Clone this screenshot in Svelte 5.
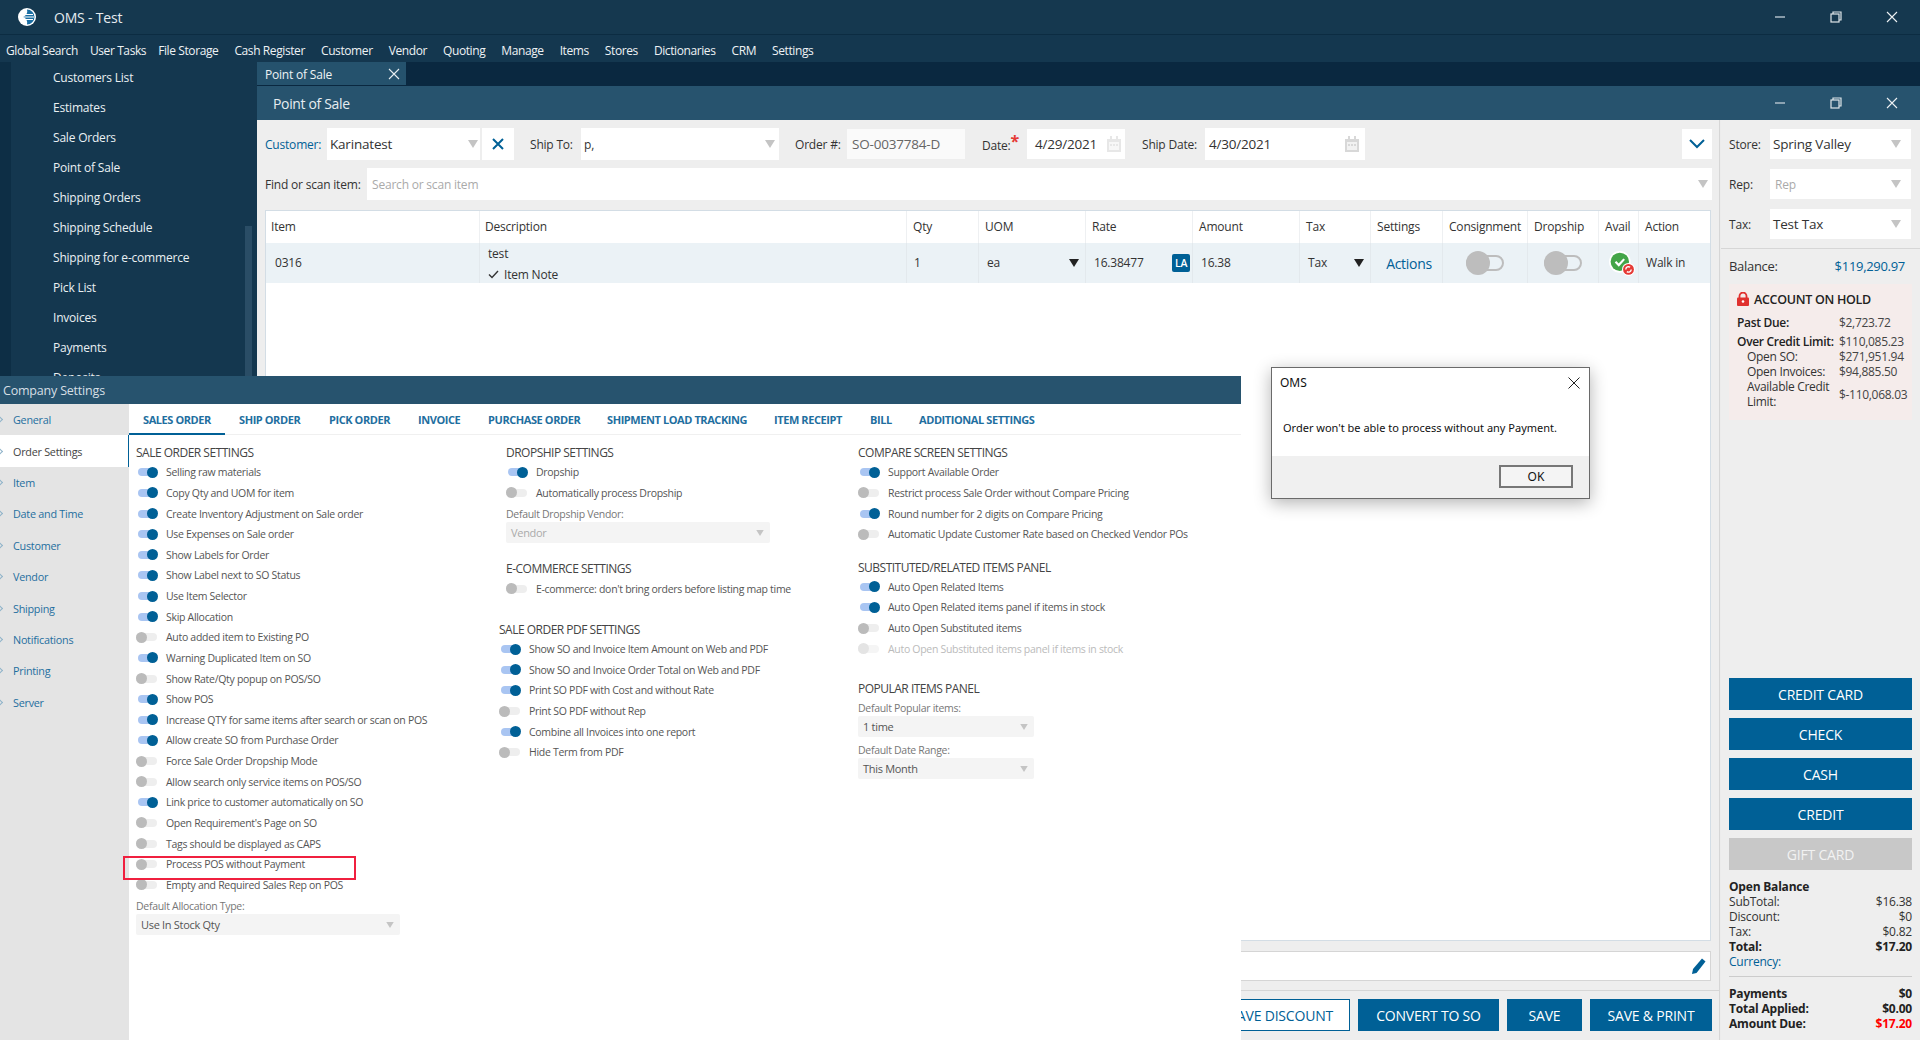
<script>
  const menu = ['Global Search','User Tasks','File Storage','Cash Register','Customer','Vendor','Quoting','Manage','Items','Stores','Dictionaries','CRM','Settings'];
  const side = ['Customers List','Estimates','Sale Orders','Point of Sale','Shipping Orders','Shipping Schedule','Shipping for e-commerce','Pick List','Invoices','Payments','Deposits'];
  const cols = [['Item',214],['Description',427],['Qty',72],['UOM',107],['Rate',107],['Amount',107],['Tax',71],['Settings',72],['Consignment',85],['Dropship',71],['Avail',40],['Action',72]];
  const nav = ['General','Order Settings','Item','Date and Time','Customer','Vendor','Shipping','Notifications','Printing','Server'];
  const tabs = [['SALES ORDER',143],['SHIP ORDER',239],['PICK ORDER',329],['INVOICE',418],['PURCHASE ORDER',488],['SHIPMENT LOAD TRACKING',607],['ITEM RECEIPT',774],['BILL',870],['ADDITIONAL SETTINGS',919]];
  const sale = [['Selling raw materials',1],['Copy Qty and UOM for item',1],['Create Inventory Adjustment on Sale order',1],['Use Expenses on Sale order',1],['Show Labels for Order',1],['Show Label next to SO Status',1],['Use Item Selector',1],['Skip Allocation',1],['Auto added item to Existing PO',0],['Warning Duplicated Item on SO',1],['Show Rate/Qty popup on POS/SO',0],['Show POS',1],['Increase QTY for same items after search or scan on POS',1],['Allow create SO from Purchase Order',1],['Force Sale Order Dropship Mode',0],['Allow search only service items on POS/SO',0],['Link price to customer automatically on SO',1],["Open Requirement's Page on SO",0],['Tags should be displayed as CAPS',0],['Process POS without Payment',0],['Empty and Required Sales Rep on POS',0]];
  const drop = [['Dropship',1],['Automatically process Dropship',0]];
  const ecom = [["E-commerce: don't bring orders before listing map time",0]];
  const pdf = [['Show SO and Invoice Item Amount on Web and PDF',1],['Show SO and Invoice Order Total on Web and PDF',1],['Print SO PDF with Cost and without Rate',1],['Print SO PDF without Rep',0],['Combine all Invoices into one report',1],['Hide Term from PDF',0]];
  const compare = [['Support Available Order',1],['Restrict process Sale Order without Compare Pricing',0],['Round number for 2 digits on Compare Pricing',1],['Automatic Update Customer Rate based on Checked Vendor POs',0]];
  const subst = [['Auto Open Related Items',1],['Auto Open Related items panel if items in stock',1],['Auto Open Substituted items',0],['Auto Open Substituted items panel if items in stock',2]];
  const pay = ['CREDIT CARD','CHECK','CASH','CREDIT'];
</script>

{#snippet winBtns()}
  <div class="winbtns">
    <svg width="12" height="12" viewBox="0 0 12 12"><path d="M1 6h10" stroke="#b9c6d0" stroke-width="1.4"/></svg>
    <svg width="12" height="12" viewBox="0 0 12 12" fill="none" stroke="#dfe6ea" stroke-width="1.2"><rect x="1" y="3" width="8" height="8"/><path d="M3 3V1h8v8H9"/></svg>
    <svg width="12" height="12" viewBox="0 0 12 12"><path d="M1 1l10 10M11 1L1 11" stroke="#eef2f4" stroke-width="1.1"/></svg>
  </div>
{/snippet}

{#snippet arrow()}
  <svg class="arr" width="10" height="8" viewBox="0 0 10 8"><path d="M0 0h10L5 8z" fill="#c4c4c4"/></svg>
{/snippet}

{#snippet cal()}
  <svg class="cal" width="14" height="16" viewBox="0 0 14 16"><path d="M0 3h14v13H0z" fill="#d8d8d8"/><path d="M2 6h10v8H2z" fill="#f2f2f2"/><path d="M3 0h2v4H3zM9 0h2v4H9z" fill="#d8d8d8"/><path d="M3 8h2v2H3zM6 8h2v2H6zM9 8h2v2H9z" fill="#d8d8d8"/></svg>
{/snippet}

{#snippet row(r)}
  <div class="srow" class:dis={r[1] === 2}>
    <span class="tog" class:on={r[1] === 1}></span>
    <span>{r[0]}</span>
  </div>
{/snippet}

<div class="app">
  <div class="title">
    <svg class="logo" width="18" height="18" viewBox="0 0 18 18">
      <circle cx="9" cy="9" r="9" fill="#fff"/>
      <path d="M9 1.5A7.5 7.5 0 0 1 9 16.5 6 6 0 0 0 5 9a6 6 0 0 0 4-7.5z" fill="#1a6ea3"/>
      <path d="M6 6.5h9M5 9h11M6 11.5h9" stroke="#fff" stroke-width="1.2"/>
    </svg>
    <span class="ttext">OMS - Test</span>
    {@render winBtns()}
  </div>
  <nav class="menu">
    {#each menu as m}<span>{m}</span>{/each}
  </nav>
  <div class="desk">
    <aside class="side">
      <div class="strip"></div>
      <ul>
        {#each side as s}<li>{s}</li>{/each}
      </ul>
      <div class="sbar"><div class="thumb"></div></div>
    </aside>
    <div class="work">
      <div class="tabstrip">
        <div class="tab"><span>Point of Sale</span>
          <svg width="12" height="12" viewBox="0 0 12 12"><path d="M1 1l10 10M11 1L1 11" stroke="#e8eef2" stroke-width="1.1"/></svg>
        </div>
      </div>
      <div class="poshead"><span>Point of Sale</span>{@render winBtns()}</div>
      <div class="posbody">
        <div class="posleft">
          <div class="frow r1">
            <label class="blue w62" for="c">Customer:</label>
            <div class="inp big cust" id="c" style="width:153px"><span>Karinatest</span>{@render arrow()}</div>
            <div class="inp xbox"><svg width="12" height="12" viewBox="0 0 12 12"><path d="M1 1l10 10M11 1L1 11" stroke="#006096" stroke-width="2"/></svg></div>
            <span class="lbl" style="width:51px;margin-left:16px">Ship To:</span>
            <div class="inp" style="width:198px"><span>p,</span>{@render arrow()}</div>
            <span class="lbl" style="width:52px;margin-left:16px">Order #:</span>
            <div class="inp big ro" style="width:118px"><span>SO-0037784-D</span></div>
            <span class="lbl" style="width:45px;margin-left:17px">Date:<b class="star">*</b></span>
            <div class="inp big short" style="width:98px"><span>4/29/2021</span>{@render cal()}</div>
            <span class="lbl" style="width:63px;margin-left:17px">Ship Date:</span>
            <div class="inp big sd" style="width:160px"><span>4/30/2021</span>{@render cal()}</div>
            <div class="inp chev"><svg width="16" height="10" viewBox="0 0 16 10"><path d="M1 1l7 7 7-7" fill="none" stroke="#006096" stroke-width="2"/></svg></div>
          </div>
          <div class="frow r2">
            <span class="lbl" style="width:102px">Find or scan item:</span>
            <div class="inp" style="width:1345px"><span class="ph">Search or scan item</span>{@render arrow()}</div>
          </div>
          <div class="grid">
            <div class="ghead">
              {#each cols as c}<div class="gc" style="width:{c[1]}px"><span>{c[0]}</span></div>{/each}
            </div>
            <div class="grow">
              <div class="gc" style="width:214px"><span class="pad">0316</span></div>
              <div class="gc desc" style="width:427px"><span>test</span><span class="note"><svg width="11" height="9" viewBox="0 0 11 9"><path d="M1 4.5l3 3L10 1" fill="none" stroke="#333" stroke-width="1.4"/></svg>Item Note</span></div>
              <div class="gc" style="width:72px"><span class="pad q">1</span></div>
              <div class="gc between" style="width:107px"><span class="pad">ea</span><svg width="10" height="8" viewBox="0 0 10 8"><path d="M0 0h10L5 8z" fill="#222"/></svg></div>
              <div class="gc between" style="width:107px"><span class="pad">16.38477</span><span class="la">LA</span></div>
              <div class="gc" style="width:107px"><span class="pad">16.38</span></div>
              <div class="gc between" style="width:71px"><span class="pad">Tax</span><svg width="10" height="8" viewBox="0 0 10 8"><path d="M0 0h10L5 8z" fill="#222"/></svg></div>
              <div class="gc center actions" style="width:72px">Actions</div>
              <div class="gc center" style="width:85px"><span class="btog"></span></div>
              <div class="gc center" style="width:71px"><span class="btog"></span></div>
              <div class="gc center avail" style="width:40px">
                <svg width="26" height="26" viewBox="0 0 24 24"><circle cx="10" cy="10" r="10" fill="#fff"/><circle cx="10" cy="10" r="8.5" fill="#43a548"/><path d="M6 10l3 3 5-5.5" fill="none" stroke="#fff" stroke-width="2"/><circle cx="18" cy="17" r="6" fill="#fff"/><circle cx="18" cy="17" r="5" fill="#e53935"/><path d="M15.5 17a2.5 2.5 0 0 1 4-2M20.5 17a2.5 2.5 0 0 1-4 2" fill="none" stroke="#fff" stroke-width="1.3"/></svg>
              </div>
              <div class="gc" style="width:72px"><span class="walk">Walk in</span></div>
            </div>
          </div>
          <div class="notes"><svg width="16" height="18" viewBox="0 0 16 18"><path d="M1 17l1-5L11 1.500l3.500 3L5.500 16z" fill="#006096"/></svg></div>
          <div class="actbar">
            <button class="ghostb">SAVE DISCOUNT</button>
            <button style="width:141px">CONVERT TO SO</button>
            <button style="width:75px">SAVE</button>
            <button style="width:122px">SAVE &amp; PRINT</button>
          </div>
        </div>
        <div class="posright">
          <div class="rsel"><span class="lbl rl">Store:</span><div class="inp big"><span>Spring Valley</span>{@render arrow()}</div></div>
          <div class="rsel"><span class="lbl rl">Rep:</span><div class="inp"><span class="ph">Rep</span>{@render arrow()}</div></div>
          <div class="rsel"><span class="lbl rl">Tax:</span><div class="inp big"><span>Test Tax</span>{@render arrow()}</div></div>
          <div class="bal"><span>Balance:</span><span class="blue">$119,290.97</span></div>
          <div class="hold">
            <div class="holdh">
              <svg width="12" height="14" viewBox="0 0 12 14"><path d="M2.500 6V4a3.500 3.500 0 0 1 7 0v2" fill="none" stroke="#e0312f" stroke-width="1.800"/><rect y="5.500" width="12" height="8.500" rx="1" fill="#e0312f"/><circle cx="6" cy="9.500" r="1.300" fill="#fff"/></svg>
              ACCOUNT ON HOLD
            </div>
            <div class="hl mt b"><span>Past Due:</span><span class="v">$2,723.72</span></div>
            <div class="hl mt2 b"><span>Over Credit Limit:</span><span class="v">$110,085.23</span></div>
            <div class="hl in"><span>Open SO:</span><span class="v">$271,951.94</span></div>
            <div class="hl in"><span>Open Invoices:</span><span class="v">$94,885.50</span></div>
            <div class="hl in"><span class="wrap">Available Credit Limit:</span><span class="v">$-110,068.03</span></div>
          </div>
          <div class="paybtns">
            {#each pay as p}<button>{p}</button>{/each}
            <button class="off">GIFT CARD</button>
          </div>
          <div class="tot">
            <div class="b">Open Balance</div>
            <div class="tl"><span>SubTotal:</span><span>$16.38</span></div>
            <div class="tl"><span>Discount:</span><span>$0</span></div>
            <div class="tl"><span>Tax:</span><span>$0.82</span></div>
            <div class="tl b"><span>Total:</span><span>$17.20</span></div>
            <div class="tl blue"><span>Currency:</span></div>
            <div class="sep"></div>
            <div class="tl b"><span>Payments</span><span>$0</span></div>
            <div class="tl b"><span>Total Applied:</span><span>$0.00</span></div>
            <div class="tl b"><span>Amount Due:</span><span class="red">$17.20</span></div>
          </div>
        </div>
      </div>
    </div>
  </div>

  <section class="settings">
    <header>Company Settings</header>
    <div class="sbody">
      <div class="snav">
        {#each nav as n, i}
          <div class="ni" class:act={i === 1}><i></i>{n}</div>
        {/each}
      </div>
      <div class="smain">
        <div class="stabs">
          {#each tabs as t, i}<span class="st" class:cur={i === 0}>{t[0]}</span>{/each}
        </div>
        <div class="scols">
          <div class="c1">
            <h4>SALE ORDER SETTINGS</h4>
            {#each sale as r}{@render row(r)}{/each}
            <div class="flab">Default Allocation Type:</div>
            <div class="fsel" style="width:264px"><span>Use In Stock Qty</span>{@render arrow()}</div>
          </div>
          <div class="c2">
            <h4>DROPSHIP SETTINGS</h4>
            {#each drop as r}{@render row(r)}{/each}
            <div class="flab">Default Dropship Vendor:</div>
            <div class="fsel" style="width:264px"><span class="ph">Vendor</span>{@render arrow()}</div>
            <h4 class="g1">E-COMMERCE SETTINGS</h4>
            {#each ecom as r}{@render row(r)}{/each}
            <div class="pdf">
              <h4>SALE ORDER PDF SETTINGS</h4>
              {#each pdf as r}{@render row(r)}{/each}
            </div>
          </div>
          <div class="c3">
            <h4>COMPARE SCREEN SETTINGS</h4>
            {#each compare as r}{@render row(r)}{/each}
            <h4 class="g2">SUBSTITUTED/RELATED ITEMS PANEL</h4>
            {#each subst as r}{@render row(r)}{/each}
            <h4 class="g3">POPULAR ITEMS PANEL</h4>
            <div class="flab f0">Default Popular items:</div>
            <div class="fsel" style="width:176px"><span>1 time</span>{@render arrow()}</div>
            <div class="flab f1">Default Date Range:</div>
            <div class="fsel" style="width:176px"><span>This Month</span>{@render arrow()}</div>
          </div>
        </div>
      </div>
    </div>
    <div class="redbox"></div>
  </section>

  <div class="dialog">
    <div class="dhead"><span>OMS</span><svg width="12" height="12" viewBox="0 0 12 12"><path d="M.5.5l11 11M11.500.5l-11 11" stroke="#222" stroke-width="1"/></svg></div>
    <div class="dmsg">Order won't be able to process without any Payment.</div>
    <div class="dfoot"><button>OK</button></div>
  </div>
</div>

<style>
  :global(body) { margin: 0; }
  * { box-sizing: border-box; }
  .app { position: relative; width: 1920px; height: 1040px; overflow: hidden; background: #eee; font-family: "Open Sans", "Noto Sans", sans-serif; font-size: 12px; color: #333; letter-spacing: -.2px; }
  .title { height: 35px; background: #15384f; border-bottom: 1px solid #0c2c42; display: flex; align-items: center; padding-left: 18px; color: #e6ecf0; }
  .ttext { margin-left: 18px; font-size: 14px; }
  .winbtns { margin-left: auto; display: flex; gap: 44px; padding-right: 22px; }
  .menu { height: 27px; background: #14374f; display: flex; gap: 16px; align-items: center; padding: 3px 0 0 6px; color: #eef2f5; font-size: 12px; letter-spacing: -.4px; }
  .menu span:nth-child(-n+2) { margin-right: -4px; }
  .desk { display: flex; height: 978px; }
  .side { width: 257px; background: #14374f; position: relative; display: flex; }
  .strip { width: 11px; background: #0d2e45; }
  .side ul { list-style: none; margin: 0; padding: 1px 0 0 42px; }
  .side li { height: 30px; line-height: 30px; color: #eaf0f3; font-size: 12px; }
  .sbar { position: absolute; left: 245px; top: 0; bottom: 0; width: 7px; }
  .thumb { margin-top: 164px; height: 160px; background: #2a4d66; }
  .work { flex: 1; display: flex; flex-direction: column; min-width: 0; }
  .tabstrip { height: 24px; background: #0a2840; }
  .tab { width: 149px; height: 23px; background: #25526d; color: #edf2f5; display: flex; align-items: center; justify-content: space-between; padding: 2px 6px 0 8px; }
  .tab svg { margin-top: -2px; }
  .poshead { height: 34px; background: #27536e; color: #e6edf1; display: flex; align-items: center; padding-left: 16px; font-size: 14px; letter-spacing: -.35px; }
  .posbody { flex: 1; display: flex; background: #eee; }
  .posleft { width: 1463px; padding: 8px 8px 0 8px; border-right: 1px solid #d6d6d6; display: flex; flex-direction: column; }
  .frow { display: flex; align-items: center; }
  .r1 { height: 32px; }
  .r2 { height: 32px; margin-top: 8px; }
  .lbl { color: #333; white-space: nowrap; flex: none; }
  .blue { color: #006096; }
  .w62 { width: 62px; flex: none; }
  .star { color: #e53935; font-size: 16px; font-weight: 700; position: relative; top: -3px; }
  .inp { height: 32px; background: #fff; display: flex; align-items: center; justify-content: space-between; padding: 0 4px 0 3px; color: #333; flex: none; }
  .inp.big { font-size: 13.500px; padding-left: 3px; }
  .inp.cust { padding-right: 2px; }
  .inp.big.sd { padding-left: 4px; padding-right: 6px; }
  .inp.ro { background: #fafafa; height: 30px; color: #666; padding-left: 5px; }
  .inp.short { height: 30px; padding-left: 8px; background: #fff; }
  .short .cal { opacity: .6; }
  .xbox { width: 32px; margin-left: 2px; justify-content: center; padding: 0; }
  .chev { width: 30px; height: 30px; margin-left: 317px; justify-content: center; padding: 0; }
  .ph { color: #aaa; }
  .inp .ph { padding-left: 2px; }
  .grid { margin-top: 10px; width: 1446px; height: 731px; background: #fff; border: 1px solid #d3dde5; flex: none; }
  .ghead, .grow { display: flex; }
  .ghead { height: 32px; }
  .ghead .gc span { position: relative; top: -1px; }
  .grow { height: 40px; background: #ebf2f6; }
  .gc { flex: none; display: flex; align-items: center; border-right: 1px solid #e3e9ed; padding-left: 5px; white-space: nowrap; }
  .gc:nth-child(n+3) { padding-left: 6px; }
  .grow .gc:nth-child(n+3) .pad { padding-left: 2px; }
  .grow .gc:nth-child(3) .pad { padding-left: 1px; }
  .ghead .gc { border-right-color: #eef0f2; }
  .gc:last-child { border-right: 0; }
  .pad { padding-left: 4px; }
  .grow .pad { position: relative; top: -1px; }
  .between { justify-content: space-between; padding-right: 6px; }
  .grow .center { justify-content: center; padding: 0; }
  .desc { flex-direction: column; align-items: flex-start; justify-content: center; gap: 4px; padding: 2px 0 0 8px; }
  .note { display: flex; align-items: center; gap: 5px; }
  .la { width: 18px; height: 18px; background: #006096; color: #fff; border-radius: 2px; font-size: 10.500px; display: flex; align-items: center; justify-content: center; font-weight: 600; margin-right: -4px; }
  .grow .actions { color: #006096; font-size: 14px; padding-left: 5px; letter-spacing: -.3px; }
  .grow .avail { padding: 2px 0 0 6px; }
  .walk { padding-left: 1px; position: relative; top: -1px; }
  .btog { position: relative; width: 38px; height: 16px; border: 2px solid #bdbdbd; border-radius: 8px; background: #ebf2f6; }
  .btog::before { content: ""; position: absolute; left: -2px; top: -6px; width: 24px; height: 24px; border-radius: 50%; background: #bdbdbd; }
  .notes { margin-top: 10px; height: 30px; width: 1446px; background: #fff; border: 1px solid #d5d5d5; display: flex; align-items: center; justify-content: flex-end; padding-right: 3px; flex: none; }
  .actbar { margin: 9px -8px 0; padding: 8px 7px 0 0; border-top: 1px solid #d6d6d6; display: flex; justify-content: flex-end; gap: 8px; }
  button { border: 0; background: #006096; color: #fff; font: inherit; font-size: 14px; height: 32px; letter-spacing: -.2px; padding: 0; }
  .ghostb { width: 150px; background: #fff; color: #006096; border: 1px solid #006096; text-align: right; padding-right: 16px; }
  .posright { flex: 1; padding: 9px 8px 0 8px; display: flex; flex-direction: column; border-left: 1px solid #ececec; }
  .rsel { display: flex; align-items: center; height: 30px; margin-bottom: 10px; margin-right: 1px; }
  .rl { width: 41px; }
  .rsel .inp { flex: 1; height: 30px; padding-right: 10px; }
  .bal { margin: -1px -8px 0; border-top: 1px solid #d6d6d6; padding: 8px 15px 0 8px; height: 36px; display: flex; justify-content: space-between; font-size: 13px; letter-spacing: -.3px; }
  .hold { background: #f5eceb; height: 136px; padding: 7px 4px 0 8px; letter-spacing: -.3px; }
  .holdh { display: flex; align-items: center; gap: 5px; font-weight: 600; font-size: 12.500px; color: #222; height: 16px; }
  .hl { display: flex; min-height: 15px; align-items: center; line-height: 15px; }
  .hl > span:first-child { width: 102px; flex: none; white-space: nowrap; }
  .hl.b > span:first-child { font-weight: 600; color: #222; }
  .hl .v { color: #444; white-space: nowrap; }
  .mt { margin-top: 8px; }
  .mt2 { margin-top: 4px; }
  .in > span:first-child { padding-left: 10px; }
  .hl.in > span.wrap { white-space: normal; }
  .paybtns { margin-top: 258px; display: flex; flex-direction: column; gap: 8px; }
  .paybtns button { width: 183px; }
  .paybtns .off { background: #c8c8c8; color: #f2f2f2; }
  .tot { margin-top: 9px; width: 183px; line-height: 15px; color: #333; }
  .tot .b { font-weight: 700; color: #222; }
  .tl { display: flex; justify-content: space-between; }
  .tl.blue { color: #006096; }
  .red { color: #f00; }
  .sep { height: 1px; background: #ccc; margin: 7px 0 9px; }

  .settings { position: absolute; left: 0; top: 376px; width: 1241px; height: 664px; background: #fff; display: flex; flex-direction: column; }
  .settings header { height: 28px; background: #27536e; color: #d6dfe5; font-size: 12.500px; line-height: 30px; padding-left: 3px; }
  .sbody { flex: 1; display: flex; }
  .snav { width: 129px; background: #e4e4e4; }
  .ni { height: 31.400px; display: flex; align-items: center; padding-left: 13px; color: #1f6f9f; font-size: 10.800px; position: relative; font-weight: 500; letter-spacing: -.25px; }
  .ni i { position: absolute; left: -3px; width: 5px; height: 5px; border-top: 1px solid #8fb3c9; border-right: 1px solid #8fb3c9; transform: rotate(45deg); }
  .ni.act { background: #fff; color: #444; border-right: 1px solid #006096; }
  .smain { flex: 1; }
  .stabs { height: 31px; border-bottom: 1px solid #f0f0f0; position: relative; }
  .st { position: absolute; top: 0; line-height: 31px; font-size: 11px; font-weight: 700; color: #1f6f9f; white-space: nowrap; letter-spacing: -.42px; }
  .st:nth-child(1) { left: 14px; } .st:nth-child(2) { left: 110px; } .st:nth-child(3) { left: 200px; } .st:nth-child(4) { left: 289px; } .st:nth-child(5) { left: 359px; } .st:nth-child(6) { left: 478px; } .st:nth-child(7) { left: 645px; } .st:nth-child(8) { left: 741px; } .st:nth-child(9) { left: 790px; }
  .st.cur::after { content: ""; position: absolute; left: -14px; width: 96px; top: 29px; height: 2px; background: #006096; }
  .scols { display: flex; padding: 8px 0 0 7px; }
  .c1 { width: 370px; } .c2 { width: 352px; } .c3 { flex: 1; }
  h4 { margin: 0 0 -1px; font-size: 12px; font-weight: 500; line-height: 20px; color: #444; white-space: nowrap; letter-spacing: -.5px; }
  .srow { height: 20.630px; display: flex; align-items: center; gap: 9px; font-size: 10.500px; color: #555; white-space: nowrap; letter-spacing: -.3px; }
  .srow.dis { color: #bbb; }
  .tog { position: relative; flex: none; width: 21px; height: 8px; background: #eee; border-radius: 4px; }
  .tog::after { content: ""; position: absolute; left: 0; top: -1.500px; width: 11px; height: 11px; border-radius: 50%; background: #bbb; }
  .tog.on { background: #a9c5f2; margin-left: 2px; width: 19px; }
  .tog.on::after { left: auto; right: -1px; background: #006096; }
  .dis .tog { background: #f5f5f5; } .dis .tog::after { background: #e4e4e4; }
  .flab { font-size: 10.500px; color: #777; line-height: 14px; margin-top: 4px; letter-spacing: -.3px; }
  .fsel { height: 21px; background: #f4f4f4; margin-top: 1px; border-radius: 2px; display: flex; align-items: center; justify-content: space-between; padding: 0 6px 0 5px; font-size: 11px; color: #555; letter-spacing: -.3px; }
  .fsel .arr { width: 8px; height: 6px; }
  .g1 { margin-top: 16px; }
  .pdf { margin: 21px 0 0 -7px; }
  .g2 { margin-top: 13px; }
  .g3 { margin-top: 20px; }
  .f0 { margin-top: 3px; }
  .f1 { margin-top: 6px; }
  .redbox { position: absolute; left: 123px; top: 480px; width: 233px; height: 24px; border: 2px solid #f0203f; }

  .dialog { position: absolute; left: 1271px; top: 367px; width: 319px; height: 132px; background: #fff; border: 1px solid #6a6a6a; box-shadow: 0 4px 16px rgba(0,0,0,.3); display: flex; flex-direction: column; letter-spacing: 0; font-family: "Noto Sans", sans-serif; color: #111; }
  .dhead { height: 29px; display: flex; align-items: center; justify-content: space-between; padding: 0 9px 0 8px; }
  .dmsg { flex: 1; padding: 23px 0 0 11px; font-size: 11px; white-space: nowrap; }
  .dfoot { height: 42px; background: #f0f0f0; display: flex; justify-content: flex-end; align-items: flex-start; padding: 9px 16px 0 0; }
  .dfoot button { width: 74px; height: 23px; color: #111; border: 2px solid #777; font-size: 12px; letter-spacing: 0; background: #f4f4f4; }
</style>
